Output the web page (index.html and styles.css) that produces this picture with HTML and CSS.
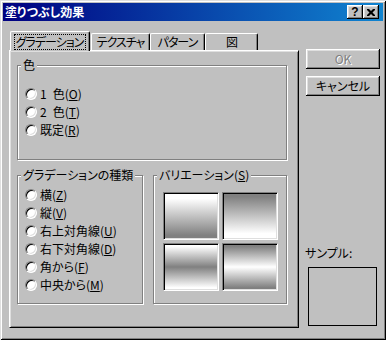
FILE: index.html
```html
<!DOCTYPE html>
<html lang="ja">
<head>
  <meta charset="UTF-8"/>
  <title>塗りつぶし効果</title>
  <link rel="stylesheet" href="styles.css">
</head>
<body>
  <div class="window">
    <!-- Title bar -->
    <div class="titlebar">
      <span class="title">塗りつぶし効果</span>
      <div class="title-buttons">
        <div class="tb-btn help">?</div>
        <div class="tb-btn close">
          <svg width="8" height="7" viewBox="0 0 8 7">
            <path d="M0 0h2l2 2l2-2h2v1l-2.5 2.5l2.5 2.5v1h-2l-2-2l-2 2h-2v-1l2.5-2.5l-2.5-2.5z" fill="#000"/>
          </svg>
        </div>
      </div>
    </div>

    <div class="main">
      <!-- Tabs and tab page -->
      <div class="tabarea">
        <div class="tabs">
          <div class="tab active"><span class="focus">グラデーション</span></div>
          <div class="tab t2">テクスチャ</div>
          <div class="tab t3">パターン</div>
          <div class="tab t4">図</div>
        </div>
        <div class="panel">
          <div class="group colors">
            <div class="group-title">色</div>
            <div class="options first">
              <div class="radio"><span class="dot"></span>1&ensp;色(<u>O</u>)</div>
              <div class="radio"><span class="dot"></span>2&ensp;色(<u>T</u>)</div>
              <div class="radio"><span class="dot"></span>既定(<u>R</u>)</div>
            </div>
          </div>
          <div class="lower">
            <div class="group type">
              <div class="group-title">グラデーションの種類</div>
              <div class="options">
                <div class="radio"><span class="dot"></span>横(<u>Z</u>)</div>
                <div class="radio"><span class="dot"></span>縦(<u>V</u>)</div>
                <div class="radio"><span class="dot"></span>右上対角線(<u>U</u>)</div>
                <div class="radio"><span class="dot"></span>右下対角線(<u>D</u>)</div>
                <div class="radio"><span class="dot"></span>角から(<u>F</u>)</div>
                <div class="radio"><span class="dot"></span>中央から(<u>M</u>)</div>
              </div>
            </div>
            <div class="group variation">
              <div class="group-title">バリエーション(<u>S</u>)</div>
              <div class="tiles">
                <div class="tile g1"></div>
                <div class="tile g2"></div>
                <div class="tile g3"></div>
                <div class="tile g4"></div>
              </div>
            </div>
          </div>
        </div>
      </div>

      <!-- Buttons and sample -->
      <div class="side">
        <div class="btn disabled">OK</div>
        <div class="btn cancel">キャンセル</div>
        <div class="sample-label">サンプル:</div>
        <div class="sample"></div>
      </div>
    </div>
  </div>
</body>
</html>
```

FILE: styles.css
```css
/* Classic dialog colours */
:root {
  --face: #c0c0c0;
  --light: #dfdfdf;
  --shadow: #808080;
}
* {
  box-sizing: border-box;
}
body {
  margin: 0;
  background: var(--face);
  color: #000;
  font-family: "Noto Sans CJK JP", sans-serif;
  font-feature-settings: "palt";
  font-size: 12px;
  line-height: 12px;
}
/* Outer window frame */
.window {
  width: 386px;
  height: 340px;
  padding: 3px;
  background: var(--face);
  box-shadow: inset 1px 1px var(--light), inset -1px -1px #000,
              inset 2px 2px #fff, inset -2px -2px var(--shadow);
}
.titlebar {
  height: 18px;
  display: flex;
  align-items: center;
  justify-content: space-between;
  padding: 0 4px 0 2px;
  background: linear-gradient(90deg, #000080, #1084d0);
}
.title {
  color: #fff;
  font-weight: bold;
}
.title-buttons {
  display: flex;
}
.tb-btn {
  width: 16px;
  height: 14px;
  display: flex;
  align-items: center;
  justify-content: center;
  background: var(--face);
  box-shadow: inset -1px -1px #000, inset 1px 1px #fff,
              inset -2px -2px var(--shadow), inset 2px 2px var(--light);
}
.help {
  font-family: "Liberation Sans", sans-serif;
  font-weight: bold;
  font-size: 12px;
}
.main {
  display: flex;
  padding: 10px 0 0 6px;
}
/* Tab strip */
.tabarea {
  width: 290px;
}
.tabs {
  display: flex;
  align-items: flex-end;
  height: 19px;
  padding-left: 1px;
}
.tab {
  height: 17px;
  display: flex;
  align-items: center;
  justify-content: center;
  white-space: nowrap;
  letter-spacing: -1px;
  border: 1px solid #fff;
  border-right-color: #000;
  border-bottom: 0;
  border-radius: 2px 2px 0 0;
  box-shadow: inset -1px 0 var(--shadow);
  background: var(--face);
}
.tab.active {
  width: 80px;
  height: 20px;
  margin-bottom: -1px;
  position: relative;
  z-index: 1;
}
.tab.t2 { width: 59px; margin-left: 1px; }
.tab.t3 { width: 55px; }
.tab.t4 { width: 53px; }
.focus {
  outline: 1px dotted #000;
  outline-offset: 1px;
  padding: 0 1px 0 0;
}
.panel {
  height: 278px;
  padding: 14px 11px 0 7px;
  border: 1px solid;
  border-color: #fff #000 #000 #fff;
  box-shadow: inset 1px 1px var(--light), inset -1px -1px var(--shadow);
}
/* Etched group boxes */
.group {
  border: 1px solid var(--shadow);
  box-shadow: inset 1px 1px #fff, 1px 1px #fff;
}
.group-title {
  width: max-content;
  margin: -7px 0 0 3px;
  padding: 0 2px;
  background: var(--face);
}
.colors {
  height: 95px;
}
.options {
  padding: 5px 0 0 7px;
}
.options.first {
  padding-top: 14px;
}
.radio {
  height: 18px;
  display: flex;
  align-items: center;
}
.dot {
  width: 12px;
  height: 12px;
  margin-right: 3px;
  border: 1px solid;
  border-color: var(--shadow) #fff #fff var(--shadow);
  border-radius: 50%;
  background: #fff;
  box-shadow: inset 1px 1px #000, inset -1px -1px var(--light);
}
.lower {
  display: flex;
  gap: 10px;
  margin-top: 15px;
}
.type {
  width: 126px;
  height: 129px;
}
.variation {
  width: 134px;
  height: 129px;
}
.tiles {
  display: grid;
  grid-template-columns: 56px 56px;
  grid-template-rows: 48px 48px;
  gap: 3px;
  margin: 11px 0 0 9px;
}
.tile {
  border: 1px solid;
  border-color: var(--shadow) #fff #fff var(--shadow);
  box-shadow: inset 1px 1px #000, inset -1px -1px var(--light);
}
.g1 { background: linear-gradient(#fff 12%, #808080 92%); }
.g2 { background: linear-gradient(#808080 8%, #fff 88%); }
.g3 { background: linear-gradient(#fff 5%, #808080 50%, #fff 95%); }
.g4 { background: linear-gradient(#808080 5%, #fff 50%, #808080 95%); }
/* Right column */
.side {
  width: 74px;
  margin-left: 7px;
  padding-top: 18px;
  display: flex;
  flex-direction: column;
}
.btn {
  height: 20px;
  display: flex;
  align-items: center;
  justify-content: center;
  box-shadow: inset -1px -1px #000, inset 1px 1px #fff,
              inset -2px -2px var(--shadow), inset 2px 2px var(--light);
}
.btn.disabled {
  color: var(--shadow);
  text-shadow: 1px 1px #fff;
}
.btn.cancel {
  margin-top: 7px;
}
.sample-label {
  margin: 151px 0 0 -1px;
}
.sample {
  width: 69px;
  height: 59px;
  margin: 8px 0 0 2px;
  border: 1px solid #000;
}
```
